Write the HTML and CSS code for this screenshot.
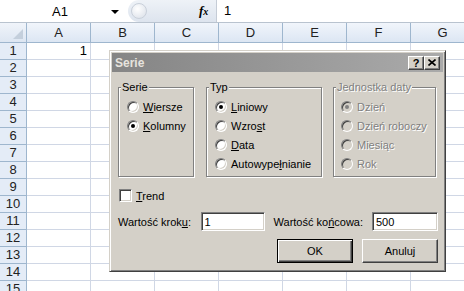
FILE: index.html
```html
<!DOCTYPE html>
<html lang="pl">

<head>
    <meta charset="UTF-8">
    <title>Serie</title>
    <link rel="stylesheet" href="styles.css">
</head>

<body>

    <div class="formula-bar">
        <div class="name-box"><span class="cell-ref">A1</span><span class="drop"></span></div>
        <div class="fx-box"><span class="knob"></span><span class="fx">f<i>x</i></span></div>
        <div class="formula">1</div>
    </div>

    <div class="sheet">
        <div class="corner"><span class="tri"></span></div><div class="ch">A</div><div class="ch">B</div><div class="ch">C</div><div class="ch">D</div><div class="ch">E</div><div class="ch">F</div><div class="ch">G</div>
        <div class="rh">1</div><div class="c num">1</div><div class="c"></div><div class="c"></div><div class="c"></div><div class="c"></div><div class="c"></div><div class="c"></div>
        <div class="rh">2</div><div class="c"></div><div class="c"></div><div class="c"></div><div class="c"></div><div class="c"></div><div class="c"></div><div class="c"></div>
        <div class="rh">3</div><div class="c"></div><div class="c"></div><div class="c"></div><div class="c"></div><div class="c"></div><div class="c"></div><div class="c"></div>
        <div class="rh">4</div><div class="c"></div><div class="c"></div><div class="c"></div><div class="c"></div><div class="c"></div><div class="c"></div><div class="c"></div>
        <div class="rh">5</div><div class="c"></div><div class="c"></div><div class="c"></div><div class="c"></div><div class="c"></div><div class="c"></div><div class="c"></div>
        <div class="rh">6</div><div class="c"></div><div class="c"></div><div class="c"></div><div class="c"></div><div class="c"></div><div class="c"></div><div class="c"></div>
        <div class="rh">7</div><div class="c"></div><div class="c"></div><div class="c"></div><div class="c"></div><div class="c"></div><div class="c"></div><div class="c"></div>
        <div class="rh">8</div><div class="c"></div><div class="c"></div><div class="c"></div><div class="c"></div><div class="c"></div><div class="c"></div><div class="c"></div>
        <div class="rh">9</div><div class="c"></div><div class="c"></div><div class="c"></div><div class="c"></div><div class="c"></div><div class="c"></div><div class="c"></div>
        <div class="rh">10</div><div class="c"></div><div class="c"></div><div class="c"></div><div class="c"></div><div class="c"></div><div class="c"></div><div class="c"></div>
        <div class="rh">11</div><div class="c"></div><div class="c"></div><div class="c"></div><div class="c"></div><div class="c"></div><div class="c"></div><div class="c"></div>
        <div class="rh">12</div><div class="c"></div><div class="c"></div><div class="c"></div><div class="c"></div><div class="c"></div><div class="c"></div><div class="c"></div>
        <div class="rh">13</div><div class="c"></div><div class="c"></div><div class="c"></div><div class="c"></div><div class="c"></div><div class="c"></div><div class="c"></div>
        <div class="rh">14</div><div class="c"></div><div class="c"></div><div class="c"></div><div class="c"></div><div class="c"></div><div class="c"></div><div class="c"></div>
        <div class="rh">15</div><div class="c"></div><div class="c"></div><div class="c"></div><div class="c"></div><div class="c"></div><div class="c"></div><div class="c"></div>
    </div>

    <!-- okno dialogowe Serie -->
    <div class="dialog">
        <div class="title">
            <span>Serie</span>
            <span class="title-btn help">?</span>
            <span class="title-btn close">
                <svg width="8" height="7" viewBox="0 0 8 7"><path d="M0.5 0.5 L7.5 6.5 M7.5 0.5 L0.5 6.5" stroke="#000" stroke-width="1.6"/></svg>
            </span>
        </div>

        <div class="dialog-body">
            <div class="groups">
                <fieldset class="group serie">
                    <legend>Serie</legend>
                    <div class="opts">
                        <div class="opt"><span class="radio"></span><span><u>W</u>iersze</span></div>
                        <div class="opt"><span class="radio on"></span><span><u>K</u>olumny</span></div>
                    </div>
                </fieldset>
                <fieldset class="group typ">
                    <legend>Typ</legend>
                    <div class="opts">
                        <div class="opt"><span class="radio on"></span><span><u>L</u>iniowy</span></div>
                        <div class="opt"><span class="radio"></span><span>Wzro<u>s</u>t</span></div>
                        <div class="opt"><span class="radio"></span><span><u>D</u>ata</span></div>
                        <div class="opt"><span class="radio"></span><span>Autowype<u>ł</u>nianie</span></div>
                    </div>
                </fieldset>
                <fieldset class="group jednostka off">
                    <legend>Jednostka daty</legend>
                    <div class="opts">
                        <div class="opt"><span class="radio on"></span><span>Dzień</span></div>
                        <div class="opt"><span class="radio"></span><span>Dzień roboczy</span></div>
                        <div class="opt"><span class="radio"></span><span>Miesiąc</span></div>
                        <div class="opt"><span class="radio"></span><span>Rok</span></div>
                    </div>
                </fieldset>
            </div>

            <div class="trend">
                <span class="check"></span><span><u>T</u>rend</span>
            </div>

            <div class="values">
                <label class="lbl-step">Wartość krok<u>u</u>:</label>
                <input class="field step" type="text" value="1">
                <label class="lbl-end">Wartość ko<u>ń</u>cowa:</label>
                <input class="field end" type="text" value="500">
            </div>

            <div class="buttons">
                <button class="btn default">OK</button>
                <button class="btn">Anuluj</button>
            </div>
        </div>
    </div>

</body>

</html>
```

FILE: styles.css
```css
body {
    margin: 0;
    padding: 0;
    width: 464px;
    height: 291px;
    overflow: hidden;
    position: relative;
    background: #fff;
    font-family: "Liberation Sans", Arial, sans-serif;
    font-size: 13px;
    color: #000;
}

/* pasek formuły */
.formula-bar {
    display: flex;
    height: 22px;
    border-top: 1px solid #b9c3cf;
    border-bottom: 1px solid #b9c3cf;
    box-sizing: content-box;
    margin-top: -1px;
}

.name-box {
    width: 128px;
    display: flex;
    align-items: center;
    position: relative;
}

.cell-ref {
    width: 120px;
    text-align: center;
    padding-left: 0;
}

.drop {
    width: 0;
    height: 0;
    border-left: 4px solid transparent;
    border-right: 4px solid transparent;
    border-top: 4px solid #000;
    margin-left: -9px;
    margin-top: 1px;
}

.fx-box {
    width: 88px;
    display: flex;
    align-items: center;
    background: linear-gradient(#eef2f7, #dde4ee);
    border-radius: 11px 0 0 11px;
    border-right: 1px solid #c5ccd6;
}

.knob {
    width: 14px;
    height: 14px;
    border-radius: 50%;
    margin-left: 3px;
    background: radial-gradient(circle at 40% 35%, #fff, #d8dee7);
    border: 1px solid #c9d0da;
}

.fx {
    margin-left: 52px;
    font-family: "Liberation Serif", serif;
    font-style: italic;
    font-weight: bold;
    font-size: 13px;
}

.fx i {
    font-size: 10px;
}

.formula {
    padding-left: 7px;
    line-height: 22px;
}

/* arkusz */
.sheet {
    display: grid;
    grid-template-columns: 27px repeat(7, 64px);
    grid-template-rows: 20px;
    grid-auto-rows: 17px;
}

.sheet > div {
    box-sizing: border-box;
}

.corner {
    background: linear-gradient(#f0f4fa, #dde6f2);
    border-right: 1px solid #9eb6ce;
    border-bottom: 1px solid #9eb6ce;
    position: relative;
}

.tri {
    position: absolute;
    right: 3px;
    bottom: 3px;
    width: 0;
    height: 0;
    border-left: 10px solid transparent;
    border-bottom: 10px solid #c4cfdc;
}

.ch {
    background: linear-gradient(#f1f5fb, #dce6f3);
    border-right: 1px solid #9eb6ce;
    border-bottom: 1px solid #9eb6ce;
    text-align: center;
    line-height: 19px;
    color: #222;
}

.rh {
    background: #e4ecf7;
    border-right: 1px solid #9eb6ce;
    border-bottom: 1px solid #9eb6ce;
    text-align: center;
    line-height: 16px;
    color: #222;
}

.c {
    border-right: 1px solid #d0d7e5;
    border-bottom: 1px solid #d0d7e5;
    line-height: 16px;
}

.num {
    text-align: right;
    padding-right: 3px;
}

/* okno dialogowe */
.dialog {
    position: absolute;
    left: 109px;
    top: 50px;
    width: 337px;
    height: 222px;
    box-sizing: border-box;
    background: #d4d0c8;
    border: 1px solid;
    border-color: #d4d0c8 #404040 #404040 #d4d0c8;
    box-shadow: inset 1px 1px #fff, inset -1px -1px #808080;
    padding: 2px;
    font-size: 11px;
    color: #000;
}

.title {
    display: flex;
    align-items: center;
    height: 19px;
    padding: 0 3px 0 3px;
    background: linear-gradient(to right, #858585, #aaaaaa);
    color: #e6e3de;
    font-weight: bold;
    font-size: 12px;
}

.title-btn {
    width: 16px;
    height: 14px;
    box-sizing: border-box;
    background: #d4d0c8;
    border: 1px solid;
    border-color: #fff #404040 #404040 #fff;
    box-shadow: inset -1px -1px #808080;
    display: flex;
    align-items: center;
    justify-content: center;
    color: #000;
    font-size: 11px;
    font-weight: bold;
}

.help {
    margin-left: auto;
}

.dialog-body {
    padding: 9px 5px 0 6px;
}

.groups {
    display: flex;
}

.group {
    margin: 0 12px 0 0;
    padding: 0;
    border: 1px solid #808080;
    box-shadow: inset 1px 1px #fff, 1px 1px #fff;
    height: 96px;
    box-sizing: border-box;
    min-width: 0;
}

.serie {
    width: 76px;
}

.typ {
    width: 116px;
    margin-right: 11px;
}

.jednostka {
    width: 103px;
    margin-right: 0;
}

legend {
    padding: 0 1px;
    margin-left: 2px;
    line-height: 13px;
    background: #d4d0c8;
}

.opts {
    padding: 3px 0 0 8px;
}

.jednostka .opts {
    padding-left: 7px;
}

.opt {
    display: flex;
    align-items: center;
    gap: 4px;
    height: 19px;
    white-space: nowrap;
}

.radio {
    width: 12px;
    height: 12px;
    box-sizing: border-box;
    border-radius: 50%;
    border: 1px solid;
    border-color: #808080 #fff #fff #808080;
    box-shadow: inset 1px 1px #404040, inset -1px -1px #d4d0c8;
    background: #fff;
    display: flex;
    align-items: center;
    justify-content: center;
    flex: none;
}

.radio.on::after {
    content: "";
    width: 4px;
    height: 4px;
    border-radius: 50%;
    background: #000;
}

.off {
    color: #808080;
    text-shadow: 1px 1px #fff;
}

.off .radio {
    background: #d4d0c8;
}

.off .radio.on::after {
    background: #808080;
}

.trend {
    display: flex;
    align-items: center;
    gap: 4px;
    height: 13px;
    margin-top: 12px;
    padding-left: 1px;
}

.check {
    width: 13px;
    height: 13px;
    box-sizing: border-box;
    border: 1px solid;
    border-color: #808080 #fff #fff #808080;
    box-shadow: inset 1px 1px #404040, inset -1px -1px #d4d0c8;
    background: #fff;
}

.values {
    display: flex;
    align-items: center;
    height: 19px;
    margin-top: 10px;
}

.lbl-step {
    width: 83px;
}

.lbl-end {
    width: 99px;
    margin-left: 9px;
}

.field {
    height: 19px;
    box-sizing: border-box;
    border: 1px solid;
    border-color: #808080 #fff #fff #808080;
    box-shadow: inset 1px 1px #404040, inset -1px -1px #d4d0c8;
    background: #fff;
    padding: 0 3px;
    margin: 0;
    font-family: "Liberation Sans", Arial, sans-serif;
    font-size: 11px;
    color: #000;
    outline: none;
}

.step {
    width: 64px;
}

.end {
    width: 66px;
}

.buttons {
    display: flex;
    justify-content: flex-end;
    gap: 9px;
    margin-top: 8px;
    padding-right: 0;
}

.btn {
    width: 76px;
    height: 24px;
    box-sizing: border-box;
    margin: 0;
    padding: 0;
    background: #d4d0c8;
    border: 1px solid;
    border-color: #fff #404040 #404040 #fff;
    box-shadow: inset -1px -1px #808080;
    font-family: "Liberation Sans", Arial, sans-serif;
    font-size: 11px;
    color: #000;
}

.btn.default {
    border-color: #000;
    box-shadow: inset 1px 1px #fff, inset -1px -1px #404040, inset -2px -2px #808080;
}
```
